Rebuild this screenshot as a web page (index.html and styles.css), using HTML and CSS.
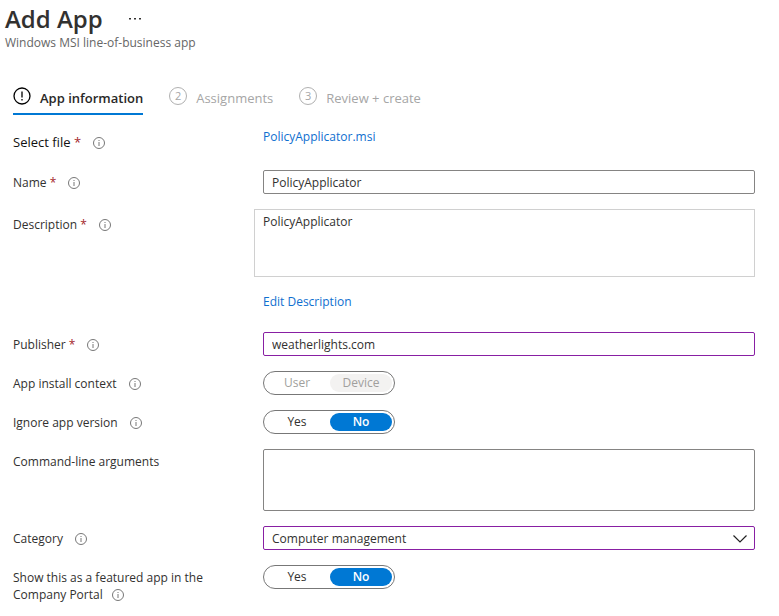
FILE: index.html
```html
<!DOCTYPE html>
<html lang="en">
<head>
<meta charset="utf-8">
<title>Add App</title>
<link rel="stylesheet" href="styles.css">
</head>
<body>
<svg class="defs" aria-hidden="true">
  <symbol id="info" viewBox="0 0 12 12">
    <circle cx="6" cy="6" r="5.5" fill="none" stroke="currentColor"/>
    <path d="M6 5v4M6 3v1" fill="none" stroke="currentColor"/>
  </symbol>
</svg>
<header class="header">
  <div class="title-row">
    <h1>Add App</h1>
    <button class="more" type="button" aria-label="More">
      <svg width="12" height="2" viewBox="0 0 12 2" fill="currentColor"><path d="M0 0h2v1.500H0zM5 0h2v1.500H5zM10 0h2v1.500h-2z"/></svg>
    </button>
  </div>
  <p class="subtitle">Windows MSI line-of-business app</p>
</header>
<main>
  <nav class="tabs">
    <button class="tab active" type="button">
      <svg class="step" viewBox="0 0 18 18"><circle cx="9" cy="9" r="8" fill="none" stroke="currentColor" stroke-width="1.3"/><path d="M9 4.5v6M9 12v1.5" stroke="currentColor" stroke-width="1.3"/></svg>
      App information
    </button>
    <button class="tab" type="button"><span class="step number">2</span>Assignments</button>
    <button class="tab" type="button"><span class="step number">3</span>Review + create</button>
  </nav>
  <form class="form">
    <div class="row file">
      <div class="label strong"><span>Select file <b>*</b></span><svg class="info"><use href="#info"/></svg></div>
      <a href="#">PolicyApplicator.msi</a>
    </div>
    <div class="row">
      <div class="label"><label for="name">Name <b>*</b></label><svg class="info"><use href="#info"/></svg></div>
      <input class="field" id="name" type="text" value="PolicyApplicator">
    </div>
    <div class="row description">
      <div class="label"><label for="description">Description <b>*</b></label><svg class="info"><use href="#info"/></svg></div>
      <div class="editor">
        <textarea id="description" readonly>PolicyApplicator</textarea>
        <a href="#">Edit Description</a>
      </div>
    </div>
    <div class="row">
      <div class="label"><label for="publisher">Publisher <b>*</b></label><svg class="info"><use href="#info"/></svg></div>
      <input class="field changed" id="publisher" type="text" value="weatherlights.com">
    </div>
    <div class="row">
      <div class="label"><span id="context">App install context</span><svg class="info"><use href="#info"/></svg></div>
      <div class="toggle" role="radiogroup" aria-labelledby="context">
        <label><input type="radio" name="context" disabled><span>User</span></label>
        <label><input type="radio" name="context" checked disabled><span>Device</span></label>
      </div>
    </div>
    <div class="row">
      <div class="label"><span id="ignore">Ignore app version</span><svg class="info"><use href="#info"/></svg></div>
      <div class="toggle" role="radiogroup" aria-labelledby="ignore">
        <label><input type="radio" name="ignore"><span>Yes</span></label>
        <label><input type="radio" name="ignore" checked><span>No</span></label>
      </div>
    </div>
    <div class="row">
      <div class="label"><label for="arguments">Command-line arguments</label></div>
      <textarea class="field tall" id="arguments"></textarea>
    </div>
    <div class="row">
      <div class="label"><label for="category">Category</label><svg class="info"><use href="#info"/></svg></div>
      <div class="select">
        <select class="field changed" id="category"><option>Computer management</option></select>
        <svg class="chevron" width="14" height="8" viewBox="0 0 14 8"><path d="M.5 .5L7 7l6.500-6.500" fill="none" stroke="currentColor" stroke-width="1.200"/></svg>
      </div>
    </div>
    <div class="row">
      <div class="label wrap"><span id="featured">Show this as a featured app in the Company Portal</span> <svg class="info"><use href="#info"/></svg></div>
      <div class="toggle" role="radiogroup" aria-labelledby="featured">
        <label><input type="radio" name="featured"><span>Yes</span></label>
        <label><input type="radio" name="featured" checked><span>No</span></label>
      </div>
    </div>
  </form>
</main>
</body>
</html>
```
FILE: styles.css
```css
* { box-sizing: border-box; }

body {
  margin: 0;
  background: #fff;
  color: #323130;
  font: 12px/17px "Open Sans", "Noto Sans", sans-serif;
}

button, input, textarea, select { font: inherit; color: inherit; }
a { color: #0f6fcf; text-decoration: none; }
.defs { display: none; }

.header { padding: 4px 5px 0; }
.title-row { display: flex; align-items: center; gap: 26px; }
h1 { margin: 0; font-size: 24px; line-height: 30px; font-weight: 600; }
.more { display: flex; padding: 0; border: 0; background: none; }
.subtitle { margin: 0; line-height: 18px; color: #666; }

main { padding: 32px 24px 16px 13px; }

.tabs { display: flex; gap: 26px; font-size: 13px; line-height: 20px; }
.tab {
  display: flex;
  gap: 9px;
  height: 31px;
  padding: 4px 0 0;
  border: 0;
  border-bottom: 2px solid transparent;
  background: none;
  color: #a6a6a6;
}
.tab.active { border-color: #0078d4; color: #292827; font-weight: 600; }
.step { width: 18px; height: 18px; margin-top: -1px; }
.active .step { color: #000; }
.number {
  border: 1px solid #b0b0b0;
  border-radius: 50%;
  font-size: 11px;
  line-height: 16px;
  text-align: center;
}

.form { display: flex; flex-direction: column; gap: 15px; padding-top: 13px; }
.row { display: grid; grid-template-columns: 250px 1fr; align-items: start; }
.label { display: flex; align-items: center; gap: 12px; padding-top: 4px; }
.label b { color: #a4262c; font-weight: 400; }
.strong { color: #111; font-size: 13px; }
.wrap { display: block; padding-right: 40px; }
.wrap .info { margin-left: 6px; vertical-align: -2px; }
.info { width: 12px; height: 12px; color: #777; }

.file { height: 27px; }
.file .label { padding-top: 6px; }

.field {
  display: block;
  width: 100%;
  height: 24px;
  padding: 0 8px;
  border: 1px solid #858483;
  border-radius: 2px;
  background: #fff;
  outline: 0;
  resize: none;
}
.changed { border-color: #881fa3; }
.tall { height: 62px; }

.description { margin-bottom: 7px; }
.description .label { padding-top: 7px; }
.editor { display: grid; gap: 16px; }
.editor textarea {
  width: calc(100% + 9px);
  height: 68px;
  margin-left: -9px;
  padding: 3px 8px;
  border: 1px solid #d0d0d0;
  resize: none;
  outline: 0;
}

.toggle {
  display: flex;
  gap: 2px;
  width: 132px;
  height: 24px;
  padding: 2px;
  border: 1px solid #777;
  border-radius: 12px;
}
.toggle label { position: relative; flex: 1; }
.toggle input { position: absolute; opacity: 0; margin: 0; }
.toggle span {
  display: block;
  border-radius: 9px;
  line-height: 18px;
  text-align: center;
}
.toggle input:checked + span { background: #0078d4; color: #fff; font-weight: 600; }
.toggle input:disabled + span { color: #a19f9d; font-weight: 400; }
.toggle input:disabled:checked + span { background: #f3f2f1; }

.select { position: relative; }
.select select { appearance: none; }
.chevron { position: absolute; right: 8px; top: 9px; pointer-events: none; color: #222; }
```
